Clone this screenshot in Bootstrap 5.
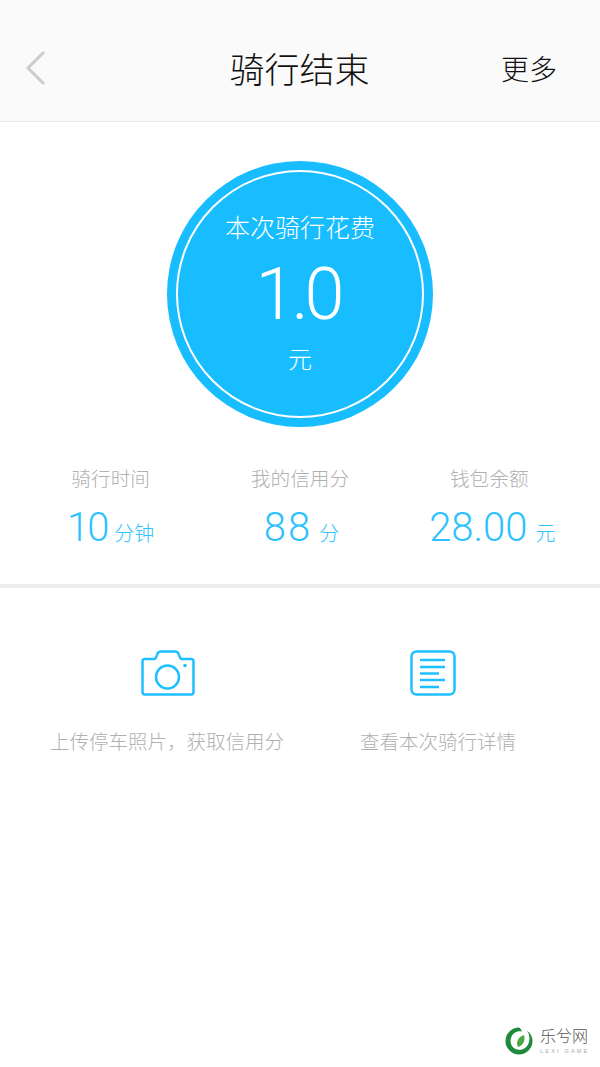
<!DOCTYPE html>
<html lang="zh-CN">
<head>
    <meta charset="UTF-8">
    <meta name="viewport" content="width=device-width, initial-scale=1.0">
    <title>骑行结束</title>
    <link href="https://cdn.jsdelivr.net/npm/bootstrap@5.3.3/dist/css/bootstrap.min.css" rel="stylesheet">
    <style>
        body { font-family: "Noto Sans CJK SC", "Noto Sans", sans-serif; background: #fff; height: 1067px; overflow: hidden; position: relative; }
        .top-bar { height: 122px; background: #fafafa; border-bottom: 1px solid #e8e8e8; padding: 14px 43px 0 24px; }
        .top-title { font-size: 35px; font-weight: 300; color: #111; line-height: 1; }
        .top-more { font-size: 28px; font-weight: 300; color: #111; line-height: 1; }
        .back-slot { width: 125px; }
        .more-slot { width: 107px; text-align: right; }
        .fee-wrap { padding-top: 39px; }
        .fee-circle { width: 266px; height: 266px; border-radius: 50%; background: #18bdff; padding: 9px; }
        .fee-ring { width: 100%; height: 100%; border-radius: 50%; border: 2px solid #fff; color: #fff; padding-top: 36px; }
        .fee-label { font-size: 25px; line-height: 36px; font-weight: 300; }
        .fee-num { font-family: Roboto, sans-serif; font-size: 72px; font-weight: 300; line-height: 84px; margin: 9px 0 0 -4px; letter-spacing: -4px; }
        .fee-unit { font-size: 24px; line-height: 30px; font-weight: 300; margin-top: 6px; }
        .stats { padding: 34px 16px 0; height: 161px; border-bottom: 4px solid #ededed; }
        .stat-label { font-size: 19.7px; line-height: 34px; color: #b0b0b0; font-weight: 300; }
        .stat-val { color: #2cc2ff; margin-top: 8px; line-height: 50px; white-space: nowrap; }
        .stat-num { font-family: Roboto, sans-serif; font-size: 40px; font-weight: 300; }
        .stat-unit { font-size: 20px; font-weight: 300; margin-left: 7px; }
        .stat-tight { letter-spacing: -2px; }
        .stat-wide { letter-spacing: 2px; }
        .stat-mid { margin-left: 3px; }
        .stat-right { margin-left: 6px; }
        .stat-right .stat-unit { margin-left: 8px; }
        .actions { padding: 62px 0 0 50px; gap: 76px; }
        .action-text { font-size: 19.5px; line-height: 30px; color: #b0b0b0; font-weight: 300; margin-top: 30px; white-space: nowrap; }
        .cam-icon { margin-left: 2px; }
        .doc-icon { margin-right: 11px; }
        .watermark { position: absolute; right: 0; bottom: 0; width: 110px; height: 57px; background: #fff; }
        .wm-logo { position: absolute; left: 15px; top: 17px; }
        .wm-name { position: absolute; left: 50px; top: 15px; font-size: 16px; line-height: 20px; font-weight: 300; color: #555; }
        .wm-sub { position: absolute; left: 50px; top: 37px; font-family: "Liberation Sans", sans-serif; font-size: 5.500px; line-height: 8px; color: #aaa; letter-spacing: 2.200px; white-space: nowrap; }
    </style>
</head>

<body>
    <div class="top-bar d-flex align-items-center justify-content-between">
        <div class="back-slot">
            <svg width="24" height="36" viewBox="0 0 24 36" fill="none" stroke="#ccc" stroke-width="3"><path d="M20 2 L4 18 L20 34"/></svg>
        </div>
        <div class="top-title">骑行结束</div>
        <div class="more-slot top-more">更多</div>
    </div>

    <div class="fee-wrap d-flex justify-content-center">
        <div class="fee-circle">
            <div class="fee-ring text-center">
                <div class="fee-label">本次骑行花费</div>
                <div class="fee-num">1.0</div>
                <div class="fee-unit">元</div>
            </div>
        </div>
    </div>

    <div class="stats row g-0 text-center">
        <div class="col-4">
            <div class="stat-label">骑行时间</div>
            <div class="stat-val"><span class="stat-num stat-tight">10</span><span class="stat-unit">分钟</span></div>
        </div>
        <div class="col-4">
            <div class="stat-label">我的信用分</div>
            <div class="stat-val stat-mid"><span class="stat-num stat-wide">88</span><span class="stat-unit">分</span></div>
        </div>
        <div class="col-4">
            <div class="stat-label">钱包余额</div>
            <div class="stat-val stat-right"><span class="stat-num">28.00</span><span class="stat-unit">元</span></div>
        </div>
    </div>

    <div class="actions d-flex">
        <div class="text-center">
            <svg class="cam-icon" width="54" height="46" viewBox="0 0 54 46" fill="none" stroke="#1fc0ff" stroke-width="2.500"><path d="M4 9 H13 C15 9 15.500 7 16 5 C16.500 2.500 18 1.500 20 1.500 H34 C36 1.500 37.500 2.500 38 5 C38.500 7 39 9 41 9 H50 C51.500 9 52.500 10 52.500 11.500 V42 C52.500 43.500 51.500 44.500 50 44.500 H4 C2.500 44.500 1.500 43.500 1.500 42 V11.500 C1.500 10 2.500 9 4 9 Z"/><circle cx="26.500" cy="27" r="11.500"/><circle cx="44" cy="15.500" r="1.800" fill="#1fc0ff" stroke="none"/></svg>
            <div class="action-text">上传停车照片，获取信用分</div>
        </div>
        <div class="text-center">
            <svg class="doc-icon" width="46" height="46" viewBox="0 0 46 46" fill="none" stroke="#1fc0ff" stroke-width="2.500"><rect x="1.500" y="1.500" width="43" height="43" rx="5"/><path d="M10 10 H35 M10 17 H35 M10 23.500 H29 M10 30 H35 M10 37 H29"/></svg>
            <div class="action-text">查看本次骑行详情</div>
        </div>
    </div>

    <div class="watermark">
        <svg class="wm-logo" width="28" height="28" viewBox="0 0 28 28"><path d="M14 0.500 A13.500 13.500 0 1 0 27.500 14 C27.500 10 25.500 6 22 4 C24.500 7 25 11 24 15 C22.500 20.500 17.500 24 12 22.500 C7 21 4.500 16 6 11 C7.500 6 12 3.500 17 4.500 C16 2 15 1 14 0.500 Z" fill="#1f8a3a"/><path d="M19 8 C20.500 13 18.500 18.500 13 20 C10.500 15.500 13 10 19 8 Z" fill="#4da63f"/></svg>
        <div class="wm-name">乐兮网</div>
        <div class="wm-sub">LEXI GAME</div>
    </div>
</body>
</html>
